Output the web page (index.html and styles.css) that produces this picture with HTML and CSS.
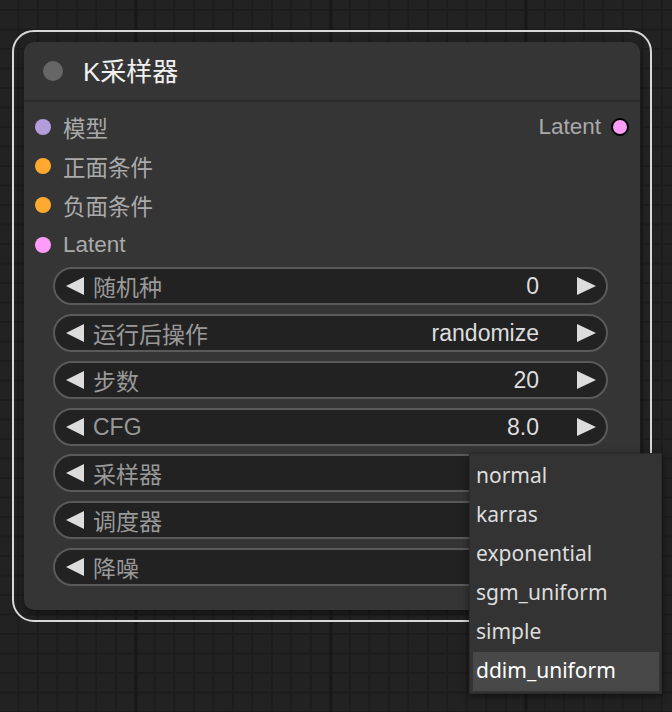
FILE: index.html
```html
<!DOCTYPE html>
<html lang="zh">
<head>
    <meta charset="UTF-8">
    <meta name="viewport" content="width=device-width, initial-scale=1.0">
    <title>K采样器</title>
    <link rel="stylesheet" href="styles.css">
</head>
<body>
    <div class="canvas">
        <div class="node-selected">
            <div class="node">
                <div class="node-title">
                    <span class="title-dot"></span>
                    <span class="title-text">K<span class="cjk">采样器</span></span>
                </div>

                <!-- Entradas / salidas -->
                <div class="slots">
                    <div class="slot-row">
                        <div class="slot cjk"><span class="dot dot-model"></span>模型</div>
                        <div class="slot slot-out">Latent<span class="dot dot-latent dot-out"></span></div>
                    </div>
                    <div class="slot-row">
                        <div class="slot cjk"><span class="dot dot-cond"></span>正面条件</div>
                    </div>
                    <div class="slot-row">
                        <div class="slot cjk"><span class="dot dot-cond"></span>负面条件</div>
                    </div>
                    <div class="slot-row">
                        <div class="slot"><span class="dot dot-latent"></span>Latent</div>
                    </div>
                </div>

                <!-- Widgets -->
                <div class="widgets">
                    <div class="widget">
                        <span class="arrow arrow-left"></span>
                        <span class="w-label cjk">随机种</span>
                        <span class="w-value">0</span>
                        <span class="arrow arrow-right"></span>
                    </div>
                    <div class="widget">
                        <span class="arrow arrow-left"></span>
                        <span class="w-label cjk">运行后操作</span>
                        <span class="w-value">randomize</span>
                        <span class="arrow arrow-right"></span>
                    </div>
                    <div class="widget">
                        <span class="arrow arrow-left"></span>
                        <span class="w-label cjk">步数</span>
                        <span class="w-value">20</span>
                        <span class="arrow arrow-right"></span>
                    </div>
                    <div class="widget">
                        <span class="arrow arrow-left"></span>
                        <span class="w-label">CFG</span>
                        <span class="w-value">8.0</span>
                        <span class="arrow arrow-right"></span>
                    </div>
                    <div class="widget">
                        <span class="arrow arrow-left"></span>
                        <span class="w-label cjk">采样器</span>
                    </div>
                    <div class="widget">
                        <span class="arrow arrow-left"></span>
                        <span class="w-label cjk">调度器</span>
                    </div>
                    <div class="widget">
                        <span class="arrow arrow-left"></span>
                        <span class="w-label cjk">降噪</span>
                    </div>
                </div>
            </div>
        </div>

        <!-- Menú contextual del programador -->
        <div class="menu">
            <div class="menu-item">normal</div>
            <div class="menu-item">karras</div>
            <div class="menu-item">exponential</div>
            <div class="menu-item">sgm_uniform</div>
            <div class="menu-item">simple</div>
            <div class="menu-item active">ddim_uniform</div>
        </div>
    </div>
</body>
</html>
```

FILE: styles.css
```css
body {
    margin: 0;
    padding: 0;
    background: #222;
    font-family: "Liberation Sans", Arial, "Noto Sans CJK SC", sans-serif;
}

.cjk {
    font-family: "Noto Sans CJK SC", sans-serif;
}

.canvas {
    position: relative;
    width: 672px;
    height: 712px;
    overflow: hidden;
    box-sizing: border-box;
    padding: 30px 0 0 12px;
    background-color: #222;
    background-image:
        linear-gradient(90deg, #181818 3px, transparent 3px),
        linear-gradient(90deg, #1c1c1c 2px, transparent 2px),
        linear-gradient(#1c1c1c 2px, transparent 2px);
    background-size: 195px 100%, 19.5px 19.5px, 19.5px 19.5px;
    background-position: 134.5px 0, 17.3px 0, 0 9px;
}

.node-selected {
    width: 640px;
    height: 592px;
    box-sizing: border-box;
    border: 2px solid #d8d8d8;
    border-radius: 22px;
    padding: 10px;
}

.node {
    width: 616px;
    height: 568px;
    background: #353535;
    border-radius: 10px;
    box-shadow: 0 3px 6px rgba(0, 0, 0, 0.45);
}

.node-title {
    height: 58px;
    display: flex;
    align-items: center;
    padding-left: 19px;
    border-bottom: 2px solid #2b2b2b;
}

.title-dot {
    width: 20px;
    height: 20px;
    border-radius: 50%;
    background: #666;
}

.title-text {
    margin-left: 20px;
    color: #f0f0f0;
    font-size: 26px;
    line-height: 30px;
}

.slots {
    padding-top: 5px;
}

.slot-row {
    height: 39.3px;
    display: flex;
    align-items: center;
    justify-content: space-between;
    padding: 0 11px 0 11px;
}

.slot {
    display: flex;
    align-items: center;
    color: #aaa;
    font-size: 22.5px;
    line-height: 28px;
}

.dot {
    width: 16px;
    height: 16px;
    border-radius: 50%;
    margin-right: 12px;
    box-sizing: border-box;
}

.dot-model { background: #b39ddb; }
.dot-cond { background: #ffa931; }
.dot-latent { background: #ff9cf9; }

.dot-out {
    width: 18px;
    height: 18px;
    margin: 0 0 0 10px;
    border: 2px solid #000;
}

.widgets {
    display: flex;
    flex-direction: column;
    gap: 8.8px;
    padding: 3px 32px 0 29px;
}

.widget {
    height: 38px;
    box-sizing: border-box;
    display: flex;
    align-items: center;
    background: #222;
    border: 2px solid #5a5a5a;
    border-radius: 19px;
    padding: 0 10px 0 11px;
    font-size: 23px;
    line-height: 28px;
}

.arrow {
    width: 0;
    height: 0;
    border-top: 9px solid transparent;
    border-bottom: 9px solid transparent;
}

.arrow-left {
    border-right: 18px solid #ddd;
}

.arrow-right {
    border-left: 19px solid #ddd;
    margin-left: 38px;
}

.w-label {
    flex: 1;
    margin-left: 9px;
    color: #999;
}

.w-value {
    color: #ddd;
}

.menu {
    position: absolute;
    left: 469px;
    top: 453px;
    width: 193px;
    box-sizing: border-box;
    padding: 3px 2px 2px 3px;
    background: #333;
    border: 1px solid #2a2a2a;
    box-shadow: 0 2px 8px rgba(0, 0, 0, 0.5);
    font-family: "Noto Sans", "Open Sans", sans-serif;
    font-size: 21px;
    color: #ddd;
}

.menu-item {
    height: 39px;
    line-height: 37px;
    padding-left: 3px;
}

.menu-item.active {
    background: #484848;
    color: #fff;
}
```
